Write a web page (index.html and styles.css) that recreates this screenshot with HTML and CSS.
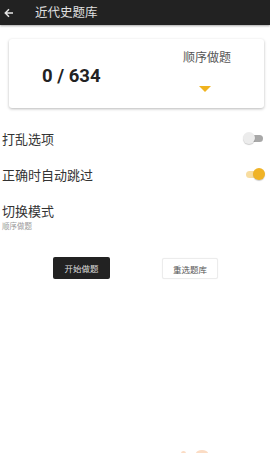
FILE: index.html
```html
<!DOCTYPE html>
<html>
<head>
<meta charset="utf-8">
<link rel="stylesheet" href="styles.css">
</head>
<body>
<div class="app">
  <header class="bar">
    <svg class="back" width="10" height="10" viewBox="0 0 10 10"><path d="M9 5H1.5M5 1.3L1.3 5 5 8.7" fill="none" stroke="#e6e6e6" stroke-width="1.5"/></svg>
    <span class="title">近代史题库</span>
  </header>
  <section class="card">
    <div class="count">0 / 634</div>
    <div class="mode">
      <div class="mode-label">顺序做题</div>
      <div class="tri"></div>
    </div>
  </section>
  <div class="row">
    <span class="label">打乱选项</span>
    <span class="switch off"><span class="knob"></span></span>
  </div>
  <div class="row">
    <span class="label">正确时自动跳过</span>
    <span class="switch on"><span class="knob"></span></span>
  </div>
  <div class="row mode-row">
    <div class="label">切换模式</div>
    <div class="sub">顺序做题</div>
  </div>
  <div class="actions">
    <button class="btn dark">开始做题</button>
    <button class="btn light">重选题库</button>
  </div>
  <div class="blobs"><span class="b1"></span><span class="b2"></span></div>
</div>
</body>
</html>
```
FILE: styles.css
```css
* { box-sizing: border-box; }
html, body { margin: 0; padding: 0; background: #fff; }
body { font-family: "Noto Sans CJK SC", "Noto Sans", Roboto, sans-serif; width: 270px; height: 453px; overflow: hidden; }
.app { position: relative; height: 453px; }
.bar { height: 25px; background: #222; display: flex; align-items: center; padding-left: 4px; box-shadow: 0 1px 2px rgba(0,0,0,0.35); }
.back { margin-right: 21px; }
.title { color: #e0e0e0; font-size: 12.5px; line-height: 1; }
.card { margin: 14px 6px 0 9px; height: 69px; border-radius: 3px; box-shadow: 0 1px 3px rgba(0,0,0,0.28); display: flex; }
.count { font-family: Roboto, sans-serif; font-weight: 700; font-size: 18.5px; color: #222; padding: 26px 0 0 33px; width: 168px; }
.mode { display: flex; flex-direction: column; align-items: center; padding-top: 9px; }
.mode-label { font-size: 12px; color: #555; padding-left: 6px; }
.tri { width: 0; height: 0; border-left: 6px solid transparent; border-right: 6px solid transparent; border-top: 6px solid #f0b31f; margin-top: 21px; margin-left: 2px; }
.row { display: flex; justify-content: space-between; align-items: center; padding: 0 5px 0 2px; height: 36px; }
.card + .row { margin-top: 12px; }
.label { font-size: 13px; color: #333; }
.switch { position: relative; width: 22px; height: 12px; }
.switch::before { content: ""; position: absolute; left: 3px; right: 2px; top: 3px; height: 7px; border-radius: 4px; }
.switch.off::before { background: #a8a8a8; }
.switch.on::before { background: #f8dda0; }
.knob { position: absolute; top: 0; width: 12px; height: 12px; border-radius: 50%; box-shadow: 0 1px 1px rgba(0,0,0,0.2); }
.off .knob { left: 0; background: #ececec; }
.on .knob { right: 0; background: #f0b326; }
.mode-row { flex-direction: column; align-items: flex-start; justify-content: flex-start; height: 38px; padding-top: 11px; }
.mode-row .label { line-height: 16px; }
.sub { font-size: 7.5px; color: #999; line-height: 9px; margin-top: 2px; }
.actions { display: flex; gap: 52px; padding-left: 53px; margin-top: 27px; }
.btn { font-family: "Noto Sans CJK SC", sans-serif; font-size: 8.5px; height: 22px; border-radius: 2px; padding: 0; }
.btn.dark { width: 57px; background: #222; color: #ddd; border: none; }
.btn.light { width: 56px; height: 21px; margin-top: 1px; background: #fff; color: #555; border: 1px solid #ececec; box-shadow: 0 0 1px rgba(0,0,0,0.08); }
.blobs span { position: absolute; border-radius: 50%; background: #fbdcc4; }
.b1 { left: 181px; top: 451px; width: 5px; height: 5px; }
.b2 { left: 196px; top: 450px; width: 12px; height: 6px; }
```
